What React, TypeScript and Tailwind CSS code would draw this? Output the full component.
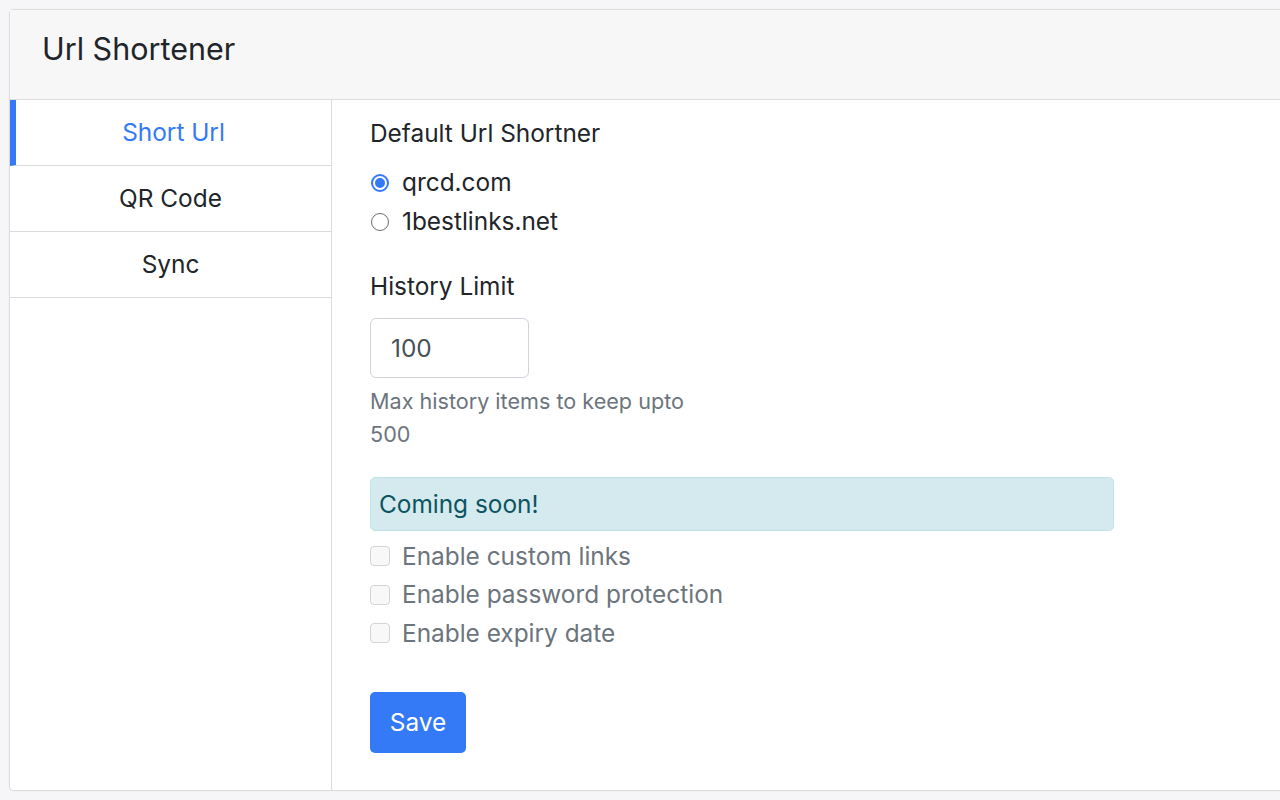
import { useState } from "react";

const tabs = ["Short Url", "QR Code", "Sync"];

const shorteners = ["qrcd.com", "1bestlinks.net"];

const comingSoon = [
  "Enable custom links",
  "Enable password protection",
  "Enable expiry date",
];

const Radio = ({ checked }: { checked: boolean }) =>
  checked ? (
    <span className="flex h-[18px] w-[18px] items-center justify-center rounded-full border-2 border-[#347af6] bg-white">
      <span className="h-[10px] w-[10px] rounded-full bg-[#347af6]" />
    </span>
  ) : (
    <span className="h-[18px] w-[18px] rounded-full border border-[#6f6f6f] bg-white" />
  );

export default function App() {
  const [active, setActive] = useState(0);
  const [shortener, setShortener] = useState(0);
  const [limit, setLimit] = useState("100");

  return (
    <div
      className="h-[800px] overflow-hidden bg-[#f6f6f8] pl-[9px] pt-[9px] pb-[9px] text-[24.4px] text-[#212529]"
      style={{ fontFamily: "Inter, 'Noto Sans', sans-serif" }}
    >
      <div className="flex h-full flex-col rounded-tl-[5px] rounded-bl-[5px] border border-r-0 border-[#dcdcdc] bg-white shadow-[0_0_3px_rgba(0,0,0,0.04)]">
        <div className="flex h-[90px] shrink-0 items-center border-b border-[#dcdcdc] bg-[#f7f7f7] pb-[11px] pl-[32px]">
          <h1 className="text-[30.5px] leading-none">Url Shortener</h1>
        </div>

        <div className="flex flex-1">
          <div className="w-[322px] shrink-0 border-r border-[#dcdcdc]">
            {tabs.map((tab, i) => (
              <button
                key={tab}
                onClick={() => setActive(i)}
                className={
                  i === active
                    ? "flex h-[66px] w-full items-center justify-center border-b border-l-[6px] border-[#dcdcdc] border-l-[#347af6] text-[#347af6]"
                    : "flex h-[66px] w-full items-center justify-center border-b border-[#dcdcdc] text-[#212529]"
                }
              >
                {tab}
              </button>
            ))}
          </div>

          <div className="flex-1 pl-[38px] pt-[15px]">
            <div className="leading-[36px]">Default Url Shortner</div>
            <div className="mt-[12px]">
              {shorteners.map((s, i) => (
                <label
                  key={s}
                  onClick={() => setShortener(i)}
                  className="flex h-[39px] cursor-pointer items-center gap-[13px] pl-px"
                >
                  <Radio checked={shortener === i} />
                  {s}
                </label>
              ))}
            </div>

            <div className="mt-[27px] leading-[36px]">History Limit</div>
            <input
              value={limit}
              onChange={(e) => setLimit(e.target.value)}
              className="mt-[14px] block h-[60px] w-[159px] rounded-[6px] border border-[#ced4da] px-[20px] text-[#495057] outline-none"
            />
            <p className="mt-[7px] w-[330px] text-[21.6px] leading-[33px] text-[#6c757d]">
              Max history items to keep upto 500
            </p>

            <div className="mt-[26px] w-[744px] rounded-[5px] border border-[#bee5eb] bg-[#d4eaef] px-[8px] py-[8px] leading-[36px] text-[#0c5460]">
              Coming soon!
            </div>
            <div className="mt-[6px]">
              {comingSoon.map((c) => (
                <div key={c} className="flex h-[38.5px] items-center gap-[12px] text-[#6c757d]">
                  <span className="h-[20px] w-[20px] rounded-[4px] border border-[#d4d4d4] bg-[#f8f8f8]" />
                  {c}
                </div>
              ))}
            </div>

            <button className="mt-[39px] h-[61px] w-[96px] rounded-[5px] bg-[#347af6] text-white">
              Save
            </button>
          </div>
        </div>
      </div>
    </div>
  );
}
